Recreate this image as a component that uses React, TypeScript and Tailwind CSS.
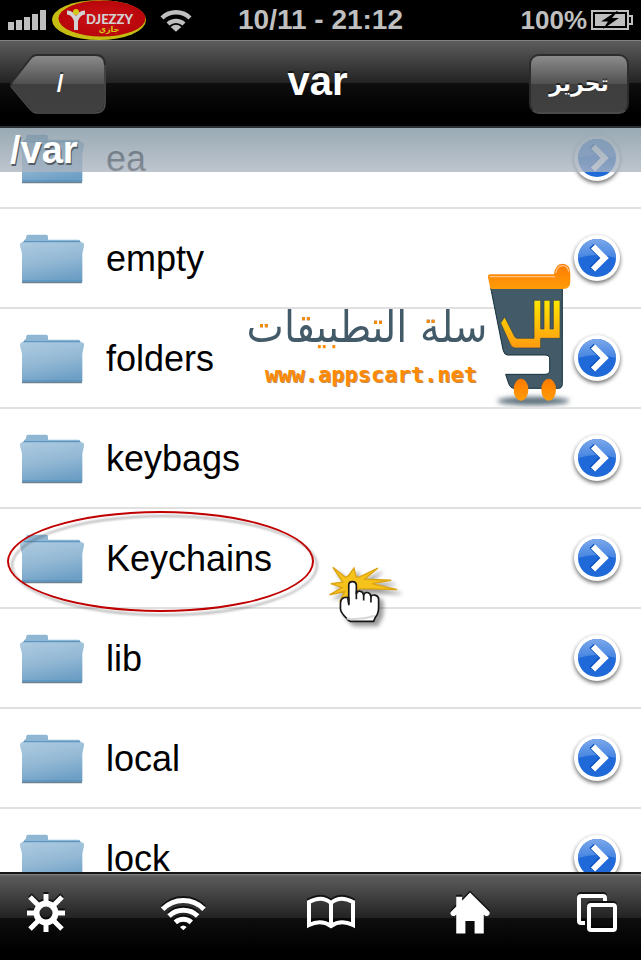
import type { ReactNode } from "react";

const folders = ["ea", "empty", "folders", "keybags", "Keychains", "lib", "local", "lock"];

function Folder() {
  return (
    <svg viewBox="60 343 192 150" className="w-16 h-[50px] mt-[2px] shrink-0" aria-hidden="true">
      <defs>
        <linearGradient id="folderFront" x1="0.2" y1="0" x2="0.5" y2="1">
          <stop offset="0" stopColor="#abc9df" />
          <stop offset="0.5" stopColor="#94b9d5" />
          <stop offset="1" stopColor="#6d9fc5" />
        </linearGradient>
      </defs>
      <path d="M66 486h180v4q0 1-2 1H69q-3 0-3-2z" fill="#6f7f8c" />
      <path d="M72 370v-8l6-5q0-12 6-12h54q6 0 6 7v8h92q5 0 5 10z" fill="#8fb6d3" />
      <path d="M72 364h169v6H66z" fill="#5f97c3" />
      <path d="M67 368h178q8 0 7 10l-5 24v81q0 4-4 4H70q-4 0-4-4v-81l-6-24q-1-10 7-10z" fill="url(#folderFront)" />
      <path d="M66 484h181" stroke="#4f8ab8" strokeWidth="3" />
    </svg>
  );
}

function Disclosure() {
  return (
    <svg viewBox="0 0 48 48" className="size-12 overflow-visible drop-shadow-[0_2px_2px_rgba(0,0,0,0.6)]" aria-hidden="true">
      <defs>
        <linearGradient id="discTop" x1="0" y1="0" x2="0" y2="1">
          <stop offset="0" stopColor="#7ba8ea" />
          <stop offset="1" stopColor="#4584e2" />
        </linearGradient>
      </defs>
      <circle cx="24" cy="24" r="23" fill="#fff" />
      <circle cx="24" cy="24" r="19" fill="#2069d8" />
      <path d="M5 24a19 19 0 0 1 38 0q-19-6-38 0z" fill="url(#discTop)" />
      <path d="M18.500 12L30 23.500l-11.500 11.500" fill="none" stroke="#0a4fc0" strokeWidth="6" />
      <path d="M20 12.500L31.500 24 20 35.500" fill="none" stroke="#fff" strokeWidth="6" />
    </svg>
  );
}

function CarrierLogo() {
  return (
    <svg viewBox="0 0 94 40" className="w-[94px] h-10" role="img" aria-label="Djezzy">
      <defs>
        <radialGradient id="carrierRed">
          <stop offset="0" stopColor="#cc1216" />
          <stop offset="1" stopColor="#b8060b" />
        </radialGradient>
      </defs>
      <ellipse cx="47" cy="20" rx="47" ry="20" fill="#c5bd12" />
      <ellipse cx="50" cy="18.500" rx="43.500" ry="18" fill="url(#carrierRed)" />
      <path d="M15 12.500q6 0 9 8q3-8 9-8M24 18v12" fill="none" stroke="#d2d2d2" strokeWidth="4" />
      <circle cx="24" cy="12" r="3" fill="#d6c818" />
      <text x="34" y="24" fill="#d2d2d2" fontFamily="Lato, sans-serif" fontWeight="900" fontSize="13">DJEZZY</text>
      <text x="57" y="32" textAnchor="middle" fill="#d6c818" fontFamily="DejaVu Sans, sans-serif" fontWeight="700" fontSize="8">جازي</text>
    </svg>
  );
}

function StatusBar() {
  return (
    <div className="h-10 shrink-0 bg-black text-[#bfbfbf] font-bold grid grid-cols-[1fr_auto_1fr] items-center px-2">
      <div className="flex items-center">
        <svg viewBox="0 0 38 20" className="w-[38px] h-5 mr-[6px]" fill="currentColor" aria-label="Signal">
          <path d="M0 12h6v8H0zM8 10h6v10H8zM16 7h6v13h-6zM24 4h6v16h-6zM32 0h6v20h-6z" />
        </svg>
        <CarrierLogo />
        <svg viewBox="480 22 96 72" className="w-8 h-6 ml-[14px]" fill="none" stroke="currentColor" strokeWidth="13" aria-label="Wi-Fi">
          <path d="M486 52a60 60 0 0 1 84 0M504 70a35 35 0 0 1 48 0" />
          <path d="M512 79q16-13 32 0l-16 14z" fill="currentColor" stroke="none" />
        </svg>
      </div>
      <span className="text-[28px] leading-10">10/11 - 21:12</span>
      <div className="flex items-center justify-end gap-1">
        <span className="text-[26px] leading-10">100%</span>
        <svg viewBox="0 0 42 20" className="w-[42px] h-5" aria-label="Battery charging">
          <path d="M1 1h36v18H1zM38 6h3v8h-3" fill="none" stroke="#bfbfbf" strokeWidth="2" />
          <path d="M4 4h30v12H4z" fill="#bfbfbf" />
          <path d="M26 1L10 11.500h7L12 19l16-11h-7l6-7z" fill="#000" />
        </svg>
      </div>
    </div>
  );
}

function NavBar() {
  return (
    <header className="h-[88px] shrink-0 border-t border-t-[#858585] border-b-2 border-b-[#2c3033] bg-linear-[to_bottom,#5c5c5c_0%,#222_50%,#0e0e0e_50%,#000_85%] grid grid-cols-[1fr_auto_1fr] items-center pl-[10px] pr-3 text-white">
      <button type="button" className="relative w-24 h-[60px] text-2xl font-bold justify-self-start text-center pl-1">
        <svg viewBox="0 0 96 60" className="absolute inset-0 size-full" aria-hidden="true">
          <defs>
            <linearGradient id="backFill" x1="0" y1="0" x2="0" y2="1">
              <stop offset="0" stopColor="#8c8c8c" />
              <stop offset="0.5" stopColor="#505050" />
              <stop offset="0.5" stopColor="#3e3e3e" />
              <stop offset="1" stopColor="#404040" />
            </linearGradient>
          </defs>
          <path d="M27 1h58q10 0 10 10v38q0 10-10 10H27q-4 0-7-4L2 34q-2-3 0-6L20 5q3-4 7-4z" fill="url(#backFill)" stroke="#2c2c2c" strokeWidth="2" />
          <path d="M95 11v38q0 10-10 10H27q-4 0-7-4L1 32" fill="none" stroke="#565656" />
        </svg>
        <span className="relative [text-shadow:0_-2px_0_rgba(0,0,0,0.5)]">/</span>
      </button>
      <h1 className="pb-[6px] pr-1 text-[40px] leading-none font-bold [text-shadow:0_-2px_0_rgba(0,0,0,0.6)]">var</h1>
      <button type="button" dir="rtl" className="w-[100px] h-[60px] justify-self-end rounded-[10px] border-2 border-[#2c2c2c] border-b-[#4a4a4a] bg-linear-[to_bottom,#8c8c8c_0%,#505050_50%,#3e3e3e_50%,#404040_100%] font-['DejaVu_Sans',sans-serif] text-[22px] font-bold [text-shadow:0_-2px_0_rgba(0,0,0,0.5)]">
        تحرير
      </button>
    </header>
  );
}

function Cart() {
  return (
    <svg viewBox="48 24 264 432" className="w-[88px] h-36 shrink-0" aria-hidden="true">
      <defs>
        <linearGradient id="cartRim" x1="0" y1="0" x2="0" y2="1">
          <stop offset="0" stopColor="#ff7a00" />
          <stop offset="1" stopColor="#ff9c08" />
        </linearGradient>
        <linearGradient id="cartSeen" x1="0" y1="0" x2="0" y2="1">
          <stop offset="0" stopColor="#ffe600" />
          <stop offset="1" stopColor="#ff9a10" />
        </linearGradient>
        <filter id="cartBlur" x="-20%" y="-100%" width="140%" height="300%">
          <feGaussianBlur stdDeviation="8" />
        </filter>
      </defs>
      <ellipse cx="190" cy="438" rx="108" ry="13" fill="#5d707c" filter="url(#cartBlur)" />
      <path d="M62 98h215v288q0 14-12 14H132q-12 0-18-20l-7-22h118q14 0 14-12v-34q0-12-14-12H112q-9 0-13-16z" fill="#435b69" stroke="#14303c" strokeWidth="3" />
      <path d="M104 186l-12 18 28 62q5 13 16 13h76v-29h58V136h-20v86h-10v-86h-18v86h-10v-86h-20v114h-50q-6 0-9-7z" fill="url(#cartSeen)" stroke="#2f4250" strokeWidth="2" />
      <path d="M62 58h190q3-32 26-32 23 0 23 33v20q0 23-21 23H64q-3 0-4-6l-6-29q-1-9 8-9z" fill="url(#cartRim)" />
      <path d="M60 65h194M258 52q4-20 20-20 14 0 18 16" fill="none" stroke="#ffc187" strokeWidth="4" strokeLinecap="round" />
      <ellipse cx="153" cy="404" rx="22" ry="33" fill="url(#cartRim)" />
      <ellipse cx="236" cy="404" rx="22" ry="33" fill="url(#cartRim)" />
    </svg>
  );
}

// the letter dots are orange: four spots above the line, then everything under it
function Watermark() {
  return (
    <div className="absolute left-[248px] top-[135px] flex pointer-events-none">
      <div className="w-[238px] flex flex-col items-center pt-7">
        <span dir="rtl" className="font-['DejaVu_Sans_Condensed','DejaVu_Sans',sans-serif] text-[44px] leading-[72px] whitespace-nowrap text-transparent bg-clip-text bg-no-repeat [background-image:linear-gradient(#ff8a00,#ff8a00),linear-gradient(#ff8a00,#ff8a00),linear-gradient(#ff8a00,#ff8a00),linear-gradient(#ff8a00,#ff8a00),linear-gradient(#435b69_53px,#ff8a00_53px)] [background-position:11px_32px,53px_25px,126px_28px,177px_26px,0_0] [background-size:13px_6px,13px_6px,12px_6px,13px_6px,100%_100%]">
          سلة التطبيقات
        </span>
        <span className="pl-2 font-['DejaVu_Sans_Mono',monospace] font-bold text-[22px] leading-6 text-[#ff8a00] [text-shadow:1px_1px_0_#c08a50]">www.appscart.net</span>
      </div>
      <Cart />
    </div>
  );
}

function Pointer() {
  return (
    <svg viewBox="54 34 210 190" className="absolute left-[328px] top-[57px] w-[70px] h-[63px] overflow-visible drop-shadow-[4px_4px_2px_rgba(0,0,0,0.4)]" aria-hidden="true">
      <path d="M68 38l38 30 8-4 18-24 6 26 8 2 58-28-40 34 80 3-58 10 76 18-84-2-32 0-56 36 14-28-46 10 38-22-34-12 36-4z" fill="#f6c21c" stroke="#dca414" strokeWidth="4" />
      <path d="M116 148V92q0-11 11-11t12 11v26q2-9 11-8t11 12q2-9 11-8t11 12q3-6 12-4t11 10v28q0 18-10 29l-5 12h-70q-6-1-12-10-18-17-18-29v-14q0-16 12-19h10z" fill="#fff" stroke="#161616" strokeWidth="5" strokeLinejoin="round" />
      <path d="M116 128v24M139 110v24M161 120v18M183 124v20" stroke="#161616" strokeWidth="5" />
      <path d="M110 192q44 6 84-8" fill="none" stroke="#d8d8d8" strokeWidth="6" />
    </svg>
  );
}

function ToolButton({ label, children }: { label: string; children: ReactNode }) {
  return (
    <button type="button" aria-label={label} className="justify-self-center text-white drop-shadow-[0_-2px_0_rgba(0,0,0,0.7)]">
      {children}
    </button>
  );
}

function ToolBar() {
  return (
    <footer className="h-[88px] shrink-0 border-t-2 border-t-[#161616] bg-linear-[to_bottom,#858585_0px,#5c5c5c_2px,#222_44px,#0e0e0e_44px,#000_76px] grid grid-cols-[92fr_182fr_112fr_166fr_88fr] items-center pb-2">
      <ToolButton label="Settings">
        <svg viewBox="0 0 40 40" className="size-10" fill="none" stroke="currentColor">
          <circle cx="20" cy="20" r="9.500" strokeWidth="6" />
          <path d="M20 1v9M20 30v9M1 20h9M30 20h9M4 4l8 8M28 28l8 8M36 4l-8 8M12 28l-8 8" strokeWidth="5" />
        </svg>
      </ToolButton>
      <ToolButton label="Wi-Fi">
        <svg viewBox="480 164 138 108" className="w-[46px] h-9" fill="none" stroke="currentColor" strokeWidth="15">
          <path d="M488 207a86 86 0 0 1 124 0M507 227a62 62 0 0 1 86 0M526 246a36 36 0 0 1 48 0" />
          <path d="M540 260q10-9 20 0l-10 10z" fill="currentColor" stroke="none" />
        </svg>
      </ToolButton>
      <ToolButton label="Bookmarks">
        <svg viewBox="0 0 50 34" className="w-[50px] h-[34px]" fill="none" stroke="currentColor" strokeWidth="4">
          <path d="M3 29V6Q16-1 25 7q9-8 22-1v23q-12-6-22 1-10-7-22-1zM25 7v23" />
        </svg>
      </ToolButton>
      <ToolButton label="Home">
        <svg viewBox="389 216 122 127" className="w-10 h-[42px]" fill="currentColor">
          <path d="M450 217l59 59q3 6-3 11-5 3-10 1l-4-4v58h-28v-38h-28v38h-28v-58l-4 4q-6 2-11-2-5-5-1-10l16-16v-30h18v12z" />
        </svg>
      </ToolButton>
      <ToolButton label="Windows">
        <svg viewBox="0 0 42 40" className="w-[42px] h-10" fill="none" stroke="currentColor" strokeWidth="4">
          <path d="M9 30H5q-2 0-2-2V5q0-2 2-2h22q2 0 2 2v3" />
          <rect x="13" y="12" width="26" height="25" rx="2" />
        </svg>
      </ToolButton>
    </footer>
  );
}

export default function App() {
  return (
    <div className="h-screen flex flex-col overflow-hidden bg-white font-['Liberation_Sans',Arial,sans-serif]">
      <StatusBar />
      <NavBar />
      <main className="relative flex-1 min-h-0 overflow-hidden">
        {/* list is scrolled a little under the path bar */}
        <ul className="-mt-[19px]">
          {folders.map((name) => (
            <li key={name} className="relative h-[100px] flex items-center border-b-2 border-[#e0e0e0] px-5">
              <Folder />
              <span className="flex-1 pl-[22px] pt-[2px] text-4xl text-black">{name}</span>
              <button type="button" aria-label={`Open ${name}`}>
                <Disclosure />
              </button>
              {name === "Keychains" && (
                <>
                  <div className="absolute left-[7px] top-[2px] w-[307px] h-[101px] rounded-[50%] border-2 border-[#c00000] drop-shadow-[4px_4px_1px_rgba(0,0,0,0.3)]" />
                  <Pointer />
                </>
              )}
            </li>
          ))}
        </ul>
        <div className="absolute inset-x-0 top-0 h-11 px-[10px] bg-linear-to-b from-[#788e9bc0] to-[#acb5c1c8] text-[38px] leading-[44px] font-bold text-white [text-shadow:1px_2px_0_#555e66]">
          /var
        </div>
        <Watermark />
      </main>
      <ToolBar />
    </div>
  );
}
